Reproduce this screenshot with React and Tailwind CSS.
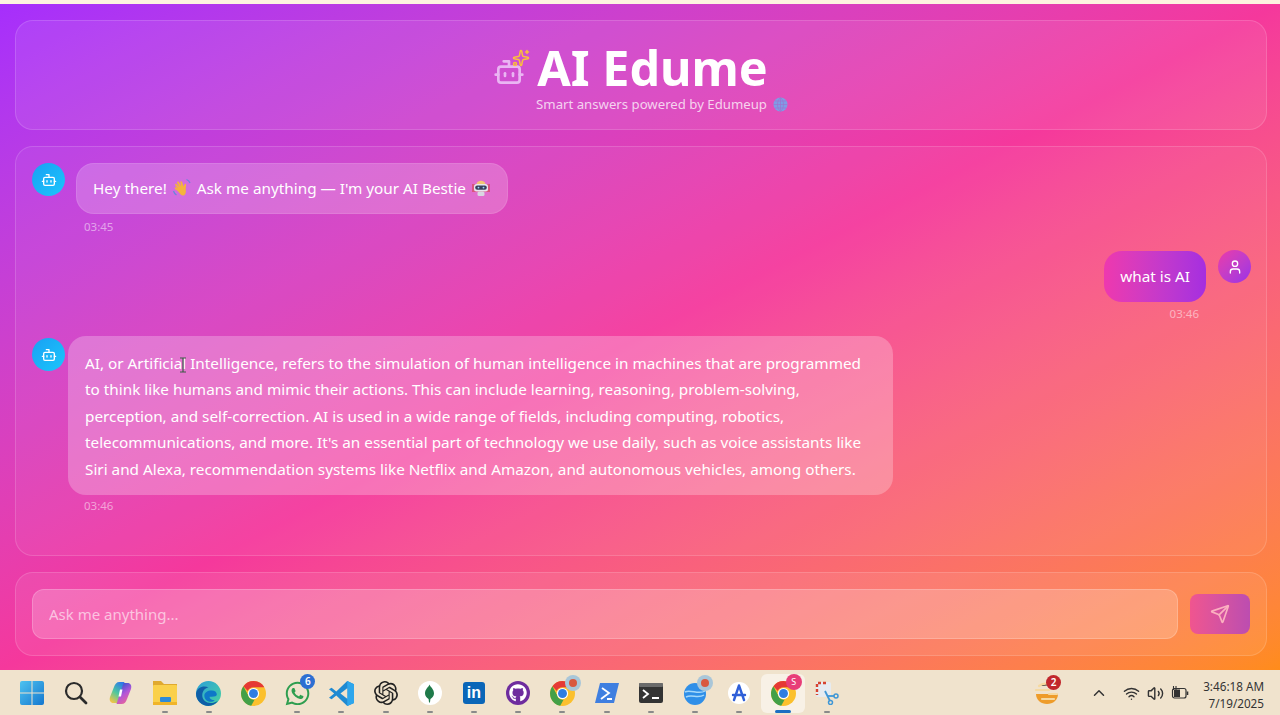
import { Bot, Send, Sparkles, User, ChevronUp, Wifi, Volume2 } from 'lucide-react';
import { FaWhatsapp, FaGithub } from 'react-icons/fa';
import { SiOpenai } from 'react-icons/si';

const font = { fontFamily: '"Noto Sans", "Open Sans", sans-serif' };

const Wave = () => (
  <svg width="20" height="20" viewBox="0 0 20 20" className="mx-[1px] inline-block align-[-4px]">
    <g transform="rotate(-28 10 10)">
      <path d="M5 11 L3.400 7.500 C3 6.300 4.500 5.700 5.100 6.800 L6 8.600 L5.300 4.500 C5.100 3.200 6.800 2.900 7.100 4.200 L8 8 L8.100 3.300 C8.100 2 9.900 2 10 3.300 L10.200 8 L11.200 4.300 C11.500 3.100 13.200 3.500 12.900 4.800 L12 9.500 L13.800 8 C14.800 7.200 15.800 8.400 15 9.300 L12.800 12.600 C11.800 15.800 10 17.600 8.200 17.400 C6 17.200 5.400 14 5 11 Z" fill="#f5b43c" />
    </g>
    <path d="M14.500 1.500 C16 2 17.500 3.500 18 5 M1.500 13 C2 14.800 3 16 4.500 17" stroke="#6a86dc" strokeWidth="1.300" fill="none" />
  </svg>
);

const RobotFace = () => (
  <svg width="20" height="20" viewBox="0 0 20 20" className="ml-[1px] inline-block align-[-4px]">
    <rect x="1" y="6" width="18" height="8" fill="#d9557f" />
    <path d="M5.500 6.500 C5.500 1.500 14.500 1.500 14.500 6.500 Z" fill="#f3c774" />
    <rect x="3" y="6" width="14" height="7.500" rx="2.500" fill="#e9e6ef" />
    <rect x="4.200" y="7.500" width="11.600" height="4.200" rx="2" fill="#39405e" />
    <circle cx="7.500" cy="9.600" r="0.900" fill="#9fd8f5" />
    <circle cx="12.500" cy="9.600" r="0.900" fill="#9fd8f5" />
    <rect x="6.500" y="13.500" width="7" height="4.500" rx="1.500" fill="#d9d6e2" />
  </svg>
);

const Globe = () => (
  <svg width="15" height="15" viewBox="0 0 15 15" className="inline-block align-[-2px]">
    <circle cx="7.500" cy="7.500" r="7" fill="#7f9ce6" />
    <path d="M0.500 7.500h14M2 4h11M2 11h11M7.500 0.500v14M7.500 0.500C3.500 4 3.500 11 7.500 14.500M7.500 0.500c4 3.500 4 10.500 0 14" stroke="#9d72cf" strokeWidth="0.700" fill="none" />
  </svg>
);

const Chrome = ({ size = 25 }) => (
  <svg width={size} height={size} viewBox="0 0 24 24">
    <circle cx="12" cy="12" r="12" fill="#fbc02d" />
    <path d="M12 0a12 12 0 0 1 10.400 6H12a6 6 0 0 0-5.500 3.600L2.300 5A12 12 0 0 1 12 0Z" fill="#e53935" />
    <path d="M2.300 5l4.700 8.800A6 6 0 0 0 13 18l-3.200 5.800A12 12 0 0 1 2.300 5Z" fill="#43a047" />
    <circle cx="12" cy="12" r="5.400" fill="#fff" />
    <circle cx="12" cy="12" r="4.300" fill="#2f7de1" />
  </svg>
);

const RoseBadge = () => (
  <span className="absolute -top-[6px] -right-[6px] flex h-[16px] w-[16px] items-center justify-center rounded-full bg-[#a9c6d8]">
    <span className="h-[8px] w-[8px] rounded-full bg-[#d9583f]" />
  </span>
);

const WinIcon = () => (
  <svg width="24" height="24" viewBox="0 0 24 24">
    <defs>
      <linearGradient id="win" x1="0" y1="0" x2="1" y2="1">
        <stop offset="0" stopColor="#4fc3f0" />
        <stop offset="1" stopColor="#1477cf" />
      </linearGradient>
    </defs>
    <path d="M2 0h9.500v11.500H0V2a2 2 0 0 1 2-2ZM12.500 0H22a2 2 0 0 1 2 2v9.500H12.500ZM0 12.500h11.500V24H2a2 2 0 0 1-2-2ZM12.500 12.500H24V22a2 2 0 0 1-2 2h-9.500Z" fill="url(#win)" />
  </svg>
);

const SearchIcon = () => (
  <svg width="24" height="24" viewBox="0 0 24 24" fill="none" stroke="#2b2b2b" strokeWidth="2.200" strokeLinecap="round">
    <circle cx="10" cy="10" r="8" />
    <path d="M16 16l6 6" strokeWidth="2.800" />
  </svg>
);

const Copilot = () => (
  <svg width="25" height="24" viewBox="0 0 24 24">
    <defs>
      <linearGradient id="cop1" x1="0.700" y1="0" x2="0.200" y2="1">
        <stop offset="0" stopColor="#2f7ae8" />
        <stop offset="0.500" stopColor="#4cc7a0" />
        <stop offset="1" stopColor="#f6c544" />
      </linearGradient>
      <linearGradient id="cop2" x1="0.300" y1="0" x2="0.800" y2="1">
        <stop offset="0" stopColor="#2d55d0" />
        <stop offset="0.500" stopColor="#b455d8" />
        <stop offset="1" stopColor="#f2688e" />
      </linearGradient>
    </defs>
    <path d="M16 1 h-5 C8 1 6.500 3 5.500 6 L1.500 16 C0.500 19.500 2 22 5 22 h4 l5-15 C14.800 4.500 15.500 2.500 16 1 Z" fill="url(#cop1)" />
    <path d="M8 23 h5 c3 0 4.500-2 5.500-5 l4-10 C23.500 4.500 22 2 19 2 h-4 l-5 15 C9.200 19.500 8.500 21.500 8 23 Z" fill="url(#cop2)" />
    <path d="M11.500 8.500 h2.500 L12.500 15.500 h-2.500 Z" fill="#fff" />
  </svg>
);

const Folder = () => (
  <svg width="26" height="26" viewBox="0 0 26 26">
    <path d="M1 1h8l3 3h13v4H1Z" fill="#e0a92e" />
    <rect x="1" y="5" width="24" height="20" rx="1" fill="#fad04a" />
    <rect x="8" y="17" width="11" height="5" rx="1" fill="#2d8bd8" />
    <rect x="1" y="22" width="24" height="3" fill="#f0b429" />
  </svg>
);

const Edge = ({ size = 25 }) => (
  <svg width={size} height={size} viewBox="0 0 24 24">
    <defs>
      <linearGradient id="edge" x1="0" y1="0" x2="1" y2="1">
        <stop offset="0" stopColor="#2b9fd8" />
        <stop offset="1" stopColor="#48d3a0" />
      </linearGradient>
    </defs>
    <circle cx="12" cy="12" r="12" fill="url(#edge)" />
    <path d="M0 12C1 6 7 4 12 6c-4 1-6 4-6 8 0 5 5 8 10 7 2-.4 3.500-1 5-2-2 3-5.500 5-9 5-6 0-12-5-12-12Z" fill="#0f5fa8" />
    <path d="M8 14c0-3 3-5 7-5 3 0 5 1.500 5 4 0 1.500-2 2-5 2h-2c0 2 2 3.500 5 3.500-1 1-2.500 1.500-4 1.500-3.500 0-6-2.500-6-6Z" fill="#0e78c8" />
  </svg>
);

const VsCode = () => (
  <svg width="25" height="25" viewBox="0 0 24 24">
    <path d="M17.500 0 24 3v18l-6.500 3L7 14l-4.500 3.500L0 16l5-4-5-4 2.500-1.500L7 10Z" fill="#1f8ad2" />
    <path d="M17.500 0 24 3v18l-6.500 3Z" fill="#2ea6ec" />
    <path d="M17.500 7 11 12l6.500 5Z" fill="#f0e2cc" />
  </svg>
);

const Mongo = () => (
  <span className="flex h-[24px] w-[24px] items-center justify-center rounded-full bg-white">
    <svg width="9" height="19" viewBox="0 0 10 20">
      <path d="M5 0c1 3 5 5 5 10 0 3-2 5-4 6l-.500 4h-1L4 16c-2-1-4-3-4-6C0 5 4 3 5 0Z" fill="#1f7a4a" />
    </svg>
  </span>
);

const LinkedIn = () => (
  <span style={{ fontFamily: '"Liberation Sans", sans-serif' }} className="flex h-[22px] w-[22px] items-center justify-center rounded-[3px] bg-[#0a66b8] text-[16px] font-bold leading-none text-white">in</span>
);

const PowerShell = () => (
  <svg width="24" height="20" viewBox="0 0 24 20">
    <path d="M5 0h19l-5 20H0Z" fill="#3f7fe0" />
    <path d="M7 5l7 5-8 6M12 16h5" stroke="#fff" strokeWidth="1.800" fill="none" />
  </svg>
);

const Terminal = () => (
  <svg width="24" height="20" viewBox="0 0 24 20">
    <rect width="24" height="20" rx="2" fill="#333" />
    <rect width="24" height="4" rx="1" fill="#6b6b6b" />
    <path d="M4 7l5 4-5 4M13 15h7" stroke="#fff" strokeWidth="1.800" fill="none" />
  </svg>
);

const CopilotBlue = () => (
  <svg width="24" height="24" viewBox="0 0 24 24">
    <circle cx="12" cy="13" r="11" fill="#2f8fe8" />
    <path d="M2 11c5-3 14 3 20-1M3 16c6-3 12 2 18-2" stroke="#a5d8fa" strokeWidth="1.500" fill="none" />
  </svg>
);

const AppStore = () => (
  <span className="relative flex h-[22px] w-[22px] items-center justify-center rounded-full bg-white">
    <svg width="16" height="18" viewBox="0 0 16 18" fill="none" stroke="#2f5fd8" strokeWidth="2.400" strokeLinecap="round">
      <path d="M8 1.500 3 16M8 1.500 13 16M2 11h12" />
    </svg>
  </span>
);

const Snip = () => (
  <svg width="24" height="24" viewBox="0 0 24 24" fill="none">
    <rect x="1" y="1" width="15" height="15" rx="2" fill="#e6ebf0" />
    <path d="M2 3v11M3 2h10" stroke="#d6432f" strokeWidth="2.400" strokeDasharray="3 2" />
    <path d="M10 10l5 10" stroke="#3f97d6" strokeWidth="1.800" />
    <path d="M12 15h7" stroke="#3f97d6" strokeWidth="1.800" />
    <circle cx="21" cy="15" r="2" stroke="#3f97d6" strokeWidth="1.500" />
    <circle cx="15.500" cy="21.500" r="2" stroke="#3f97d6" strokeWidth="1.500" />
  </svg>
);

const Weather = () => (
  <svg width="26" height="24" viewBox="0 0 26 24">
    <path d="M2 13h22c0 6-5 10-11 10S2 19 2 13Z" fill="#ee9c2a" />
    <path d="M5 5c3-2 8-3 12-1M2 9h13M15 13h8M8 18h12" stroke="#f6d9a0" strokeWidth="2.200" strokeLinecap="round" />
  </svg>
);

const Battery = () => (
  <svg width="18" height="14" viewBox="0 0 18 14" fill="none" stroke="#333" strokeWidth="1.200">
    <rect x="1.500" y="2.500" width="13.500" height="9.500" rx="2" />
    <path d="M16.500 5.500v3.500" strokeWidth="1.600" />
    <path d="M3 3.500h6v7.500H3Z" fill="#333" stroke="none" />
    <path d="M5 0v4M2.500 0v4" strokeWidth="1.100" />
  </svg>
);

const taskIcons = [
  { id: 'win', icon: <WinIcon /> },
  { id: 'search', icon: <SearchIcon /> },
  { id: 'copilot', icon: <Copilot /> },
  { id: 'files', icon: <Folder />, open: true },
  { id: 'edge', icon: <Edge />, open: true },
  { id: 'chrome', icon: <Chrome /> },
  { id: 'whatsapp', icon: <FaWhatsapp className="text-[27px] text-[#2e9e4f]" />, open: true, count: '6' },
  { id: 'vscode', icon: <VsCode />, open: true },
  { id: 'openai', icon: <SiOpenai className="text-[24px] text-[#222]" />, open: true },
  { id: 'mongo', icon: <Mongo />, open: true },
  { id: 'linkedin', icon: <LinkedIn />, open: true },
  { id: 'github', icon: <span className="flex h-[24px] w-[24px] items-center justify-center rounded-full bg-[#6e2c9e]"><FaGithub className="text-[18px] text-white" /></span>, open: true },
  { id: 'chrome2', icon: <span className="relative flex"><Chrome /><RoseBadge /></span>, open: true },
  { id: 'pwsh', icon: <PowerShell />, open: true },
  { id: 'term', icon: <Terminal />, open: true },
  { id: 'copilot2', icon: <span className="relative flex"><CopilotBlue /><RoseBadge /></span>, open: true },
  { id: 'store', icon: <AppStore />, open: true },
  { id: 'chrome3', icon: <span className="relative flex"><Chrome /><span className="absolute -top-[7px] -right-[6px] flex h-[16px] w-[16px] items-center justify-center rounded-full bg-[#e83e78] text-[9px] text-white">S</span></span>, active: true },
  { id: 'snip', icon: <Snip />, open: true },
];

function TaskIcon({ item }) {
  return (
    <div className={`relative flex h-[39px] w-[44.200px] items-center justify-center rounded-md ${item.active ? 'bg-[#f8f1e6]' : ''}`}>
      {item.icon}
      {item.count && (
        <span className="absolute top-0 right-[4px] flex h-[15px] w-[15px] items-center justify-center rounded-full bg-[#2d6fd2] text-[10px] font-semibold text-white">{item.count}</span>
      )}
      {item.open && <span className="absolute bottom-0 left-1/2 h-[2px] w-[6px] -translate-x-1/2 rounded-full bg-[#8a8a8a]" />}
      {item.active && <span className="absolute bottom-0 left-1/2 h-[3px] w-[16px] -translate-x-1/2 rounded-full bg-[#1b6fc2]" />}
    </div>
  );
}

function Avatar({ user, className = '' }) {
  return (
    <div className={`flex h-[33px] w-[33px] shrink-0 items-center justify-center rounded-full text-white ${user ? 'bg-gradient-to-br from-[#ec38a8] to-[#9a2ee8]' : 'bg-gradient-to-br from-[#1aa0f4] to-[#1dc6fb]'} ${className}`}>
      {user ? <User size={16} /> : <Bot size={16} />}
    </div>
  );
}

export default function App() {
  return (
    <div style={font} className="flex h-[715px] w-[1280px] flex-col overflow-hidden bg-[#fdf3e0]">
      <div className="h-[4px] shrink-0" />
      <main className="flex min-h-0 flex-1 flex-col gap-[16px] bg-gradient-to-br from-[#a62efc] via-[#f5389c] to-[#ff8c1a] pl-[15px] pr-[13px] pt-[16px] pb-[14px]">
        <header className="flex h-[110px] shrink-0 flex-col items-center rounded-[18px] border border-white/15 bg-white/[0.08] pt-[22px] text-white">
          <div className="mr-[19px] flex items-center">
            <div className="relative mr-[9px] mt-[6px] h-[36px] w-[33px] text-[#eab5f3]">
              <Bot size={32} strokeWidth={2} className="absolute bottom-0 -left-[2px]" />
              <Sparkles size={18} strokeWidth={2} className="absolute -top-[3px] -right-[2px] text-[#fbbf3c]" />
            </div>
            <h1 className="text-[48.500px] font-bold leading-[48px]">AI Edume</h1>
          </div>
          <p className="mt-[3px] ml-[42px] flex items-center gap-[6px] text-[13.200px] leading-[20px] text-white/75">
            <span>Smart answers powered by Edumeup</span> <Globe />
          </p>
        </header>

        <section className="flex h-[410px] shrink-0 flex-col rounded-[18px] border border-white/15 bg-white/[0.05] pt-[16px] pl-[16px] pr-[15px] text-white">
          <div className="flex items-start gap-[11px]">
            <Avatar />
            <div>
              <div className="rounded-[18px] border border-white/10 bg-white/20 px-[16px] py-[12px] text-[15.300px] leading-[25px]">
                Hey there! <Wave /> Ask me anything — I'm your AI Bestie <RobotFace />
              </div>
              <div className="mt-[5px] ml-[8px] text-[11.500px] leading-[16px] text-white/50">03:45</div>
            </div>
          </div>

          <div className="mt-[15px] flex items-start justify-end gap-[12px]">
            <div className="flex flex-col items-end">
              <div className="mt-[1px] rounded-[18px] bg-gradient-to-r from-[#ee38ae] to-[#a52ee0] px-[16px] py-[13px] text-[15.300px] leading-[25px]">what is AI</div>
              <div className="mt-[4px] mr-[7px] text-[11.500px] leading-[16px] text-white/50">03:46</div>
            </div>
            <Avatar user />
          </div>

          <div className="mt-[14px] flex items-start gap-[3px]">
            <Avatar className="mt-[2px]" />
            <div>
              <div className="relative w-[825px] rounded-[18px] bg-white/25 px-[17px] pt-[14px] pb-[13px] text-[15.300px] leading-[26.400px]">
                AI, or Artificial Intelligence, refers to the simulation of human intelligence in machines that are programmed to think like humans and mimic their actions. This can include learning, reasoning, problem-solving, perception, and self-correction. AI is used in a wide range of fields, including computing, robotics, telecommunications, and more. It's an essential part of technology we use daily, such as voice assistants like Siri and Alexa, recommendation systems like Netflix and Amazon, and autonomous vehicles, among others.
                <svg width="8" height="16" viewBox="0 0 8 16" className="absolute top-[21px] left-[111px]" fill="none" stroke="#3d5a46" strokeWidth="1.200">
                  <path d="M1 1h6M4 1v14M1 15h6" />
                </svg>
              </div>
              <div className="mt-[3px] ml-[16px] text-[11.500px] leading-[16px] text-white/50">03:46</div>
            </div>
          </div>
        </section>

        <form className="flex h-[84px] shrink-0 items-center gap-[12px] rounded-[18px] border border-white/15 bg-white/[0.08] pl-[16px] pr-[16px]">
          <input
            placeholder="Ask me anything..."
            className="h-[50px] flex-1 rounded-[12px] border border-white/20 bg-white/20 px-[16px] text-[15px] text-white outline-none placeholder:text-white/60"
          />
          <button type="button" className="flex h-[40px] w-[60px] items-center justify-center rounded-[8px] bg-gradient-to-r from-[#f0558f] to-[#bc4db0] text-[#fbb0c0]">
            <Send size={20} />
          </button>
        </form>
      </main>

      <footer className="flex h-[45px] shrink-0 items-center bg-[#f0e3cd] pl-[10px] pr-[16px] pt-[1px]">
        {taskIcons.map(item => <TaskIcon key={item.id} item={item} />)}

        <div className="relative ml-auto flex">
          <Weather />
          <span className="absolute -top-[6px] -right-[1px] flex h-[15px] w-[15px] items-center justify-center rounded-full bg-[#c1272d] text-[10px] font-semibold text-white">2</span>
        </div>
        <ChevronUp size={18} className="ml-[30px] text-[#333]" />
        <Wifi size={17} className="ml-[15px] text-[#333]" />
        <Volume2 size={17} className="ml-[7px] text-[#333]" />
        <div className="ml-[7px] flex"><Battery /></div>
        <div className="ml-[14px] mt-[3px] text-right text-[11.700px] leading-[17px] text-[#333]">
          <div>3:46:18 AM</div>
          <div>7/19/2025</div>
        </div>
      </footer>
    </div>
  );
}
